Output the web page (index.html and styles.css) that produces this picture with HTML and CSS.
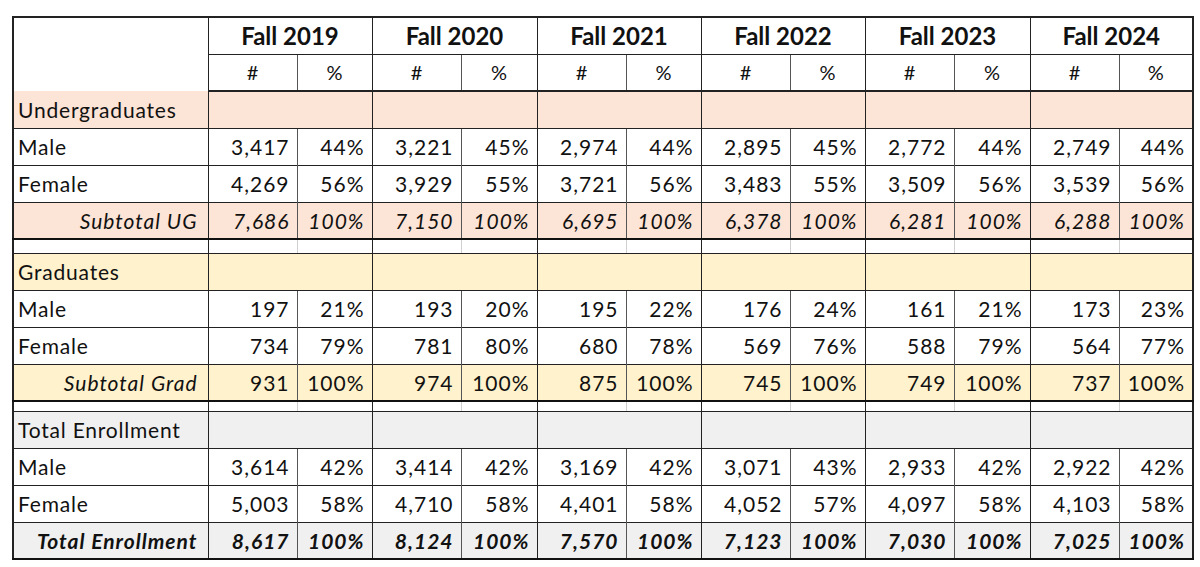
FILE: index.html
```html
<!DOCTYPE html>
<html>
<head>
<meta charset="utf-8">
<link rel="stylesheet" href="styles.css">
</head>
<body>
<table class="enroll">
  <colgroup>
    <col class="c-label">
    <col class="c-num"><col class="c-pct">
    <col class="c-num"><col class="c-pct2">
    <col class="c-num"><col class="c-pct">
    <col class="c-num"><col class="c-pct">
    <col class="c-num"><col class="c-pct2">
    <col class="c-num"><col class="c-pct3">
  </colgroup>
  <tr class="h1">
    <td class="lbl-blank" rowspan="2"></td>
    <th colspan="2">Fall 2019</th>
    <th colspan="2">Fall 2020</th>
    <th colspan="2">Fall 2021</th>
    <th colspan="2">Fall 2022</th>
    <th colspan="2">Fall 2023</th>
    <th colspan="2">Fall 2024</th>
  </tr>
  <tr class="h2">
    <td class="n">#</td><td class="p">%</td>
    <td class="n">#</td><td class="p">%</td>
    <td class="n">#</td><td class="p">%</td>
    <td class="n">#</td><td class="p">%</td>
    <td class="n">#</td><td class="p">%</td>
    <td class="n">#</td><td class="p">%</td>
  </tr>

  <tr class="sec ug">
    <td class="lbl">Undergraduates</td>
    <td colspan="2"></td><td colspan="2"></td><td colspan="2"></td><td colspan="2"></td><td colspan="2"></td><td colspan="2"></td>
  </tr>
  <tr class="row first">
    <td class="lbl">Male</td>
    <td class="n">3,417</td><td class="p">44%</td>
    <td class="n">3,221</td><td class="p">45%</td>
    <td class="n">2,974</td><td class="p">44%</td>
    <td class="n">2,895</td><td class="p">45%</td>
    <td class="n">2,772</td><td class="p">44%</td>
    <td class="n">2,749</td><td class="p">44%</td>
  </tr>
  <tr class="row">
    <td class="lbl">Female</td>
    <td class="n">4,269</td><td class="p">56%</td>
    <td class="n">3,929</td><td class="p">55%</td>
    <td class="n">3,721</td><td class="p">56%</td>
    <td class="n">3,483</td><td class="p">55%</td>
    <td class="n">3,509</td><td class="p">56%</td>
    <td class="n">3,539</td><td class="p">56%</td>
  </tr>
  <tr class="sub ug">
    <td class="lbl">Subtotal UG</td>
    <td class="n">7,686</td><td class="p">100%</td>
    <td class="n">7,150</td><td class="p">100%</td>
    <td class="n">6,695</td><td class="p">100%</td>
    <td class="n">6,378</td><td class="p">100%</td>
    <td class="n">6,281</td><td class="p">100%</td>
    <td class="n">6,288</td><td class="p">100%</td>
  </tr>
  <tr class="gap gap1">
    <td></td><td class="n"></td><td class="p"></td><td class="n"></td><td class="p"></td><td class="n"></td><td class="p"></td><td class="n"></td><td class="p"></td><td class="n"></td><td class="p"></td><td class="n"></td><td class="p"></td>
  </tr>

  <tr class="sec gr">
    <td class="lbl">Graduates</td>
    <td colspan="2"></td><td colspan="2"></td><td colspan="2"></td><td colspan="2"></td><td colspan="2"></td><td colspan="2"></td>
  </tr>
  <tr class="row first">
    <td class="lbl">Male</td>
    <td class="n">197</td><td class="p">21%</td>
    <td class="n">193</td><td class="p">20%</td>
    <td class="n">195</td><td class="p">22%</td>
    <td class="n">176</td><td class="p">24%</td>
    <td class="n">161</td><td class="p">21%</td>
    <td class="n">173</td><td class="p">23%</td>
  </tr>
  <tr class="row">
    <td class="lbl">Female</td>
    <td class="n">734</td><td class="p">79%</td>
    <td class="n">781</td><td class="p">80%</td>
    <td class="n">680</td><td class="p">78%</td>
    <td class="n">569</td><td class="p">76%</td>
    <td class="n">588</td><td class="p">79%</td>
    <td class="n">564</td><td class="p">77%</td>
  </tr>
  <tr class="sub gr plain">
    <td class="lbl">Subtotal Grad</td>
    <td class="n">931</td><td class="p">100%</td>
    <td class="n">974</td><td class="p">100%</td>
    <td class="n">875</td><td class="p">100%</td>
    <td class="n">745</td><td class="p">100%</td>
    <td class="n">749</td><td class="p">100%</td>
    <td class="n">737</td><td class="p">100%</td>
  </tr>
  <tr class="gap gap2">
    <td></td><td class="n"></td><td class="p"></td><td class="n"></td><td class="p"></td><td class="n"></td><td class="p"></td><td class="n"></td><td class="p"></td><td class="n"></td><td class="p"></td><td class="n"></td><td class="p"></td>
  </tr>

  <tr class="sec tot">
    <td class="lbl">Total Enrollment</td>
    <td colspan="2"></td><td colspan="2"></td><td colspan="2"></td><td colspan="2"></td><td colspan="2"></td><td colspan="2"></td>
  </tr>
  <tr class="row first">
    <td class="lbl">Male</td>
    <td class="n">3,614</td><td class="p">42%</td>
    <td class="n">3,414</td><td class="p">42%</td>
    <td class="n">3,169</td><td class="p">42%</td>
    <td class="n">3,071</td><td class="p">43%</td>
    <td class="n">2,933</td><td class="p">42%</td>
    <td class="n">2,922</td><td class="p">42%</td>
  </tr>
  <tr class="row">
    <td class="lbl">Female</td>
    <td class="n">5,003</td><td class="p">58%</td>
    <td class="n">4,710</td><td class="p">58%</td>
    <td class="n">4,401</td><td class="p">58%</td>
    <td class="n">4,052</td><td class="p">57%</td>
    <td class="n">4,097</td><td class="p">58%</td>
    <td class="n">4,103</td><td class="p">58%</td>
  </tr>
  <tr class="sub tot bold">
    <td class="lbl">Total Enrollment</td>
    <td class="n">8,617</td><td class="p">100%</td>
    <td class="n">8,124</td><td class="p">100%</td>
    <td class="n">7,570</td><td class="p">100%</td>
    <td class="n">7,123</td><td class="p">100%</td>
    <td class="n">7,030</td><td class="p">100%</td>
    <td class="n">7,025</td><td class="p">100%</td>
  </tr>
</table>
</body>
</html>
```

FILE: styles.css
```css
html, body {
  margin: 0;
  padding: 0;
  background: #ffffff;
}

body {
  padding: 16px 0 0 12px;
  font-family: Lato, "Open Sans", sans-serif;
  color: #111;
}

.enroll {
  border-collapse: collapse;
  table-layout: fixed;
  width: 1181px;
  border: 2px solid #222;
  font-size: 21px;
}

.c-label { width: 195px; }
.c-num { width: 89px; }
.c-pct { width: 75px; }
.c-pct2 { width: 76px; }
.c-pct3 { width: 74px; }

.enroll td, .enroll th {
  padding: 0 7px;
  border-left: 1.5px solid #222;
  border-right: 1.5px solid #222;
  white-space: nowrap;
  overflow: hidden;
}

.enroll td.p {
  border-left: 1px solid #555;
}
.enroll td.n {
  border-right: 1px solid #555;
}

.enroll tr { height: 37px; }

.h1 th {
  font-weight: 700;
  font-size: 24px;
  text-align: center;
  border-bottom: 1px solid #222;
  border-top: 2px solid #222;
}
.h2 td {
  text-align: center;
  font-size: 20px;
  border-bottom: 2px solid #222;
}

.lbl {
  text-align: left;
  letter-spacing: 0.8px;
  padding-left: 4px !important;
}

.row td { text-align: right; letter-spacing: 1px; border-top: 1px solid #222; }
.row td.lbl { text-align: left; letter-spacing: 0.8px; }
.row.first td { border-bottom: 1px dotted #aaa; }

.sec td { border-bottom: 1px solid #222; }

.sub td {
  text-align: right;
  letter-spacing: 1px;
  font-style: italic;
  border-top: 1px solid #222;
  border-bottom: 2px solid #111;
}
.sub td.lbl { text-align: right; padding-right: 10px; }
.sub.plain td.n, .sub.plain td.p { font-style: normal; }
.sub.bold td { font-weight: 700; }

.ug td { background: #fce4d6; }
.gr td { background: #fff2cc; }
.tot td { background: #f0f0f0; }

.gap1 { height: 14px !important; }
.gap2 { height: 10px !important; }
.gap td {
  padding: 0;
  border-bottom: 1.5px solid #222;
}
.gap td.p { border-left: 1px solid #d0d0d0; }
.gap td.n { border-right: 1px solid #d0d0d0; }
```
